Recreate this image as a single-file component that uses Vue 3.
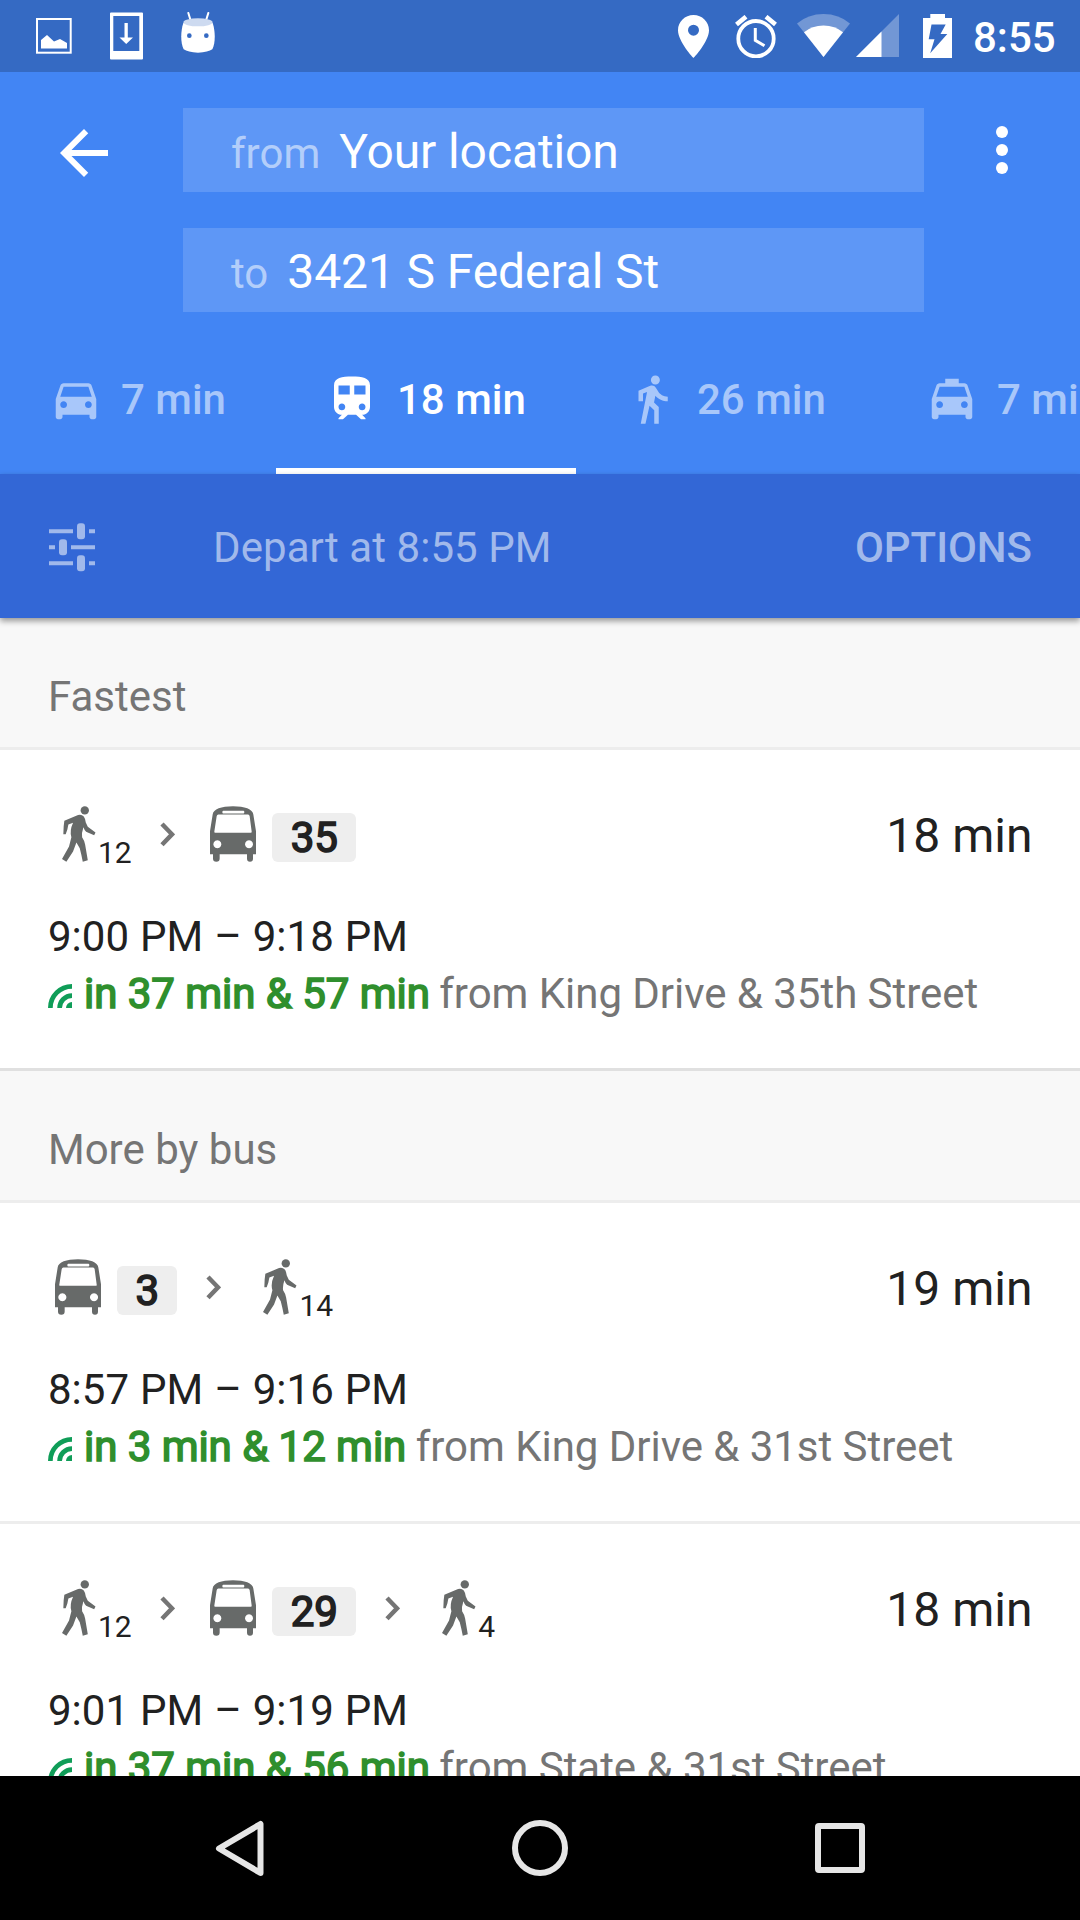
<script setup>
const tabs = [
  {
    label: '7 min',
    width: 276,
    icon: 'M18.92 6.01C18.72 5.42 18.16 5 17.5 5h-11c-.66 0-1.21.42-1.42 1.01L3 12v8c0 .55.45 1 1 1h1c.55 0 1-.45 1-1v-1h12v1c0 .55.45 1 1 1h1c.55 0 1-.45 1-1v-8l-2.08-5.99zM6.5 16c-.83 0-1.5-.67-1.5-1.5S5.67 13 6.5 13s1.5.67 1.5 1.5S7.33 16 6.5 16zm11 0c-.83 0-1.5-.67-1.5-1.5s.67-1.5 1.5-1.5 1.5.67 1.5 1.5-.67 1.5-1.5 1.5zM5 11l1.5-4.5h11L19 11H5z',
  },
  {
    label: '18 min',
    width: 300,
    active: true,
    icon: 'M12 2c-4.42 0-8 .5-8 4v9.5C4 17.43 5.57 19 7.5 19L6 20.5v.5h2l2.2-2h3.6l2.2 2h2v-.5L16.5 19c1.93 0 3.5-1.57 3.5-3.5V6c0-3.5-3.58-4-8-4zM7.5 17c-.83 0-1.5-.67-1.5-1.5S6.67 14 7.5 14s1.5.67 1.5 1.5S8.33 17 7.5 17zm3.5-7H6V6h5v4zm2 0V6h5v4h-5zm3.5 7c-.83 0-1.5-.67-1.5-1.5s.67-1.5 1.5-1.5 1.5.67 1.5 1.5-.67 1.5-1.5 1.5z',
  },
  {
    label: '26 min',
    width: 300,
    icon: 'M13.5 5.5c1.1 0 2-.9 2-2s-.9-2-2-2-2 .9-2 2 .9 2 2 2zM9.8 8.9L7 23h2.1l1.8-8 2.1 2v6h2v-7.5l-2.1-2 .6-3C14.8 12 16.8 13 19 13v-2c-1.9 0-3.5-1-4.3-2.4l-1-1.6c-.4-.6-1-1-1.7-1-.3 0-.5.1-.8.1L6 8.3V13h2V9.6l1.8-.7',
  },
  {
    label: '7 min',
    width: 276,
    icon: 'M18.92 6.01C18.72 5.42 18.16 5 17.5 5H15V3H9v2H6.5c-.66 0-1.21.42-1.42 1.01L3 12v8c0 .55.45 1 1 1h1c.55 0 1-.45 1-1v-1h12v1c0 .55.45 1 1 1h1c.55 0 1-.45 1-1v-8l-2.08-5.99zM6.5 16c-.83 0-1.5-.67-1.5-1.5S5.67 13 6.5 13s1.5.67 1.5 1.5S7.33 16 6.5 16zm11 0c-.83 0-1.5-.67-1.5-1.5s.67-1.5 1.5-1.5 1.5.67 1.5 1.5-.67 1.5-1.5 1.5zM5 11l1.5-4.5h11L19 11H5z',
  },
]

const sections = [
  {
    title: 'Fastest',
    routes: [
      {
        steps: [{ kind: 'walk', text: '12' }, { kind: 'next' }, { kind: 'bus', text: '35' }],
        duration: '18 min',
        times: '9:00 PM – 9:18 PM',
        live: 'in 37 min & 57 min',
        stop: 'from King Drive & 35th Street',
      },
    ],
  },
  {
    title: 'More by bus',
    routes: [
      {
        steps: [{ kind: 'bus', text: '3' }, { kind: 'next' }, { kind: 'walk', text: '14' }],
        duration: '19 min',
        times: '8:57 PM – 9:16 PM',
        live: 'in 3 min & 12 min',
        stop: 'from King Drive & 31st Street',
      },
      {
        steps: [
          { kind: 'walk', text: '12' },
          { kind: 'next' },
          { kind: 'bus', text: '29' },
          { kind: 'next' },
          { kind: 'walk', text: '4' },
        ],
        duration: '18 min',
        times: '9:01 PM – 9:19 PM',
        live: 'in 37 min & 56 min',
        stop: 'from State & 31st Street',
      },
    ],
  },
]
</script>

<template>
  <div class="screen">
    <div class="status">
      <svg class="s-image" width="36" height="36" viewBox="0 0 36 36">
        <rect x="1" y="1" width="33.7" height="33.7" fill="none" stroke="#fff" stroke-width="2" />
        <path d="M5 30.5V22l6-5 7 6.5 6-2.5 7 4v5.5z" fill="#fff" />
      </svg>
      <svg class="s-download" width="33" height="48" viewBox="0 0 33 48">
        <path fill="#fff" fill-rule="evenodd" d="M1 .5h31a1 1 0 0 1 1 1V46.500a1 1 0 0 1-1 1H1a1 1 0 0 1-1-1V1.500a1 1 0 0 1 1-1zM3.300 4v35h26V4z" />
        <path fill="#fff" d="M14.500 11h3.300v14.500H23L16.200 32 9.500 25.500h5z" />
      </svg>
      <svg class="s-droid" width="34" height="41" viewBox="0 0 102 123">
        <path d="M22 3l8 26M82 3l-8 26" stroke="#fff" stroke-width="6" stroke-linecap="round" />
        <path d="M7 33C-2 60-1 95 8 112Q20 121 51 122 82 121 94 112C103 95 104 60 95 33z" fill="#fff" />
        <ellipse cx="51" cy="31" rx="44" ry="12" fill="#cddaf0" />
        <circle cx="25" cy="71" r="7" fill="#356ac3" />
        <circle cx="76" cy="71" r="7" fill="#356ac3" />
      </svg>
      <span class="spacer"></span>
      <svg class="s-pin" width="31" height="43" viewBox="0 0 31 43">
        <path fill="#fff" fill-rule="evenodd" d="M15.500 0C6.900 0 0 6.700 0 15.200 0 26.500 15.500 43 15.500 43S31 26.500 31 15.200C31 6.700 24.100 0 15.500 0zm0 9.700a5.500 5.500 0 1 1 0 11 5.500 5.500 0 0 1 0-11z" />
      </svg>
      <svg class="s-alarm" width="42" height="43" viewBox="0 0 42 43" fill="none" stroke="#fff">
        <circle cx="21" cy="23.700" r="17.700" stroke-width="3.800" />
        <path d="M1.500 9.500L11 1.700M40.500 9.500L31 1.700" stroke-width="4.600" />
        <path d="M20.300 13v12.300l9.200 5.500" stroke-width="3" />
      </svg>
      <svg class="s-wifi" width="53" height="43" viewBox="0 0 53 43">
        <path d="M0 9.500Q11 0 26.500 0T53 9.500L26.500 43z" fill="#fff" fill-opacity=".3" />
        <path d="M7 18.300Q15 11.500 26.500 11.500T46 18.300L26.500 43z" fill="#fff" />
      </svg>
      <svg class="s-cell" width="43" height="43" viewBox="0 0 43 43">
        <path d="M0 43L43 0v43z" fill="#fff" fill-opacity=".3" />
        <path d="M0 43l25.500-25.500V43z" fill="#fff" />
      </svg>
      <svg class="s-battery" width="29" height="44" viewBox="0 0 29 44">
        <path fill="#fff" d="M7.300 0h14.700v4H29v40H0V4h7.300z" />
        <path fill="#356ac3" d="M8.500 10.500h14.200L17.500 20h6.800L7.200 39.300l4.300-14H5.700z" />
      </svg>
      <span class="clock">8:55</span>
    </div>

    <div class="header">
      <div class="search">
        <svg class="back" width="72" height="72" viewBox="0 0 24 24">
          <path fill="#fff" d="M20 11H7.830l5.590-5.590L12 4l-8 8 8 8 1.410-1.410L7.830 13H20v-2z" />
        </svg>
        <div class="fields">
          <div class="field"><span class="hint">from</span><span class="place">Your location</span></div>
          <div class="field"><span class="hint">to</span><span class="place">3421 S Federal St</span></div>
        </div>
        <svg class="more" width="72" height="72" viewBox="0 0 24 24" fill="#fff">
          <circle cx="12" cy="6" r="2" />
          <circle cx="12" cy="12" r="2" />
          <circle cx="12" cy="18" r="2" />
        </svg>
      </div>
      <div class="tabs">
        <div v-for="(tab, i) in tabs" :key="i" class="tab" :class="{ active: tab.active }" :style="{ width: tab.width + 'px' }">
          <svg width="54" height="54" viewBox="0 0 24 24"><path fill="currentColor" :d="tab.icon" /></svg>
          <span>{{ tab.label }}</span>
        </div>
      </div>
    </div>

    <div class="options">
      <svg width="46" height="49" viewBox="0 0 46 49" fill="#a1b9eb">
        <path d="M0 6.300h24v4H0zM40 6.300h6v4h-6zM0 22.300h6v4H0zM22 22.300h24v4H22zM0 38.300h24v4H0zM40 38.300h6v4h-6z" />
        <rect x="28" y=".3" width="8" height="16" rx="3" />
        <rect x="10" y="16.300" width="8" height="16" rx="3" />
        <rect x="28" y="32.300" width="8" height="16" rx="3" />
      </svg>
      <span class="depart">Depart at 8:55 PM</span>
      <span class="opt">OPTIONS</span>
    </div>

    <div class="list">
      <template v-for="section in sections" :key="section.title">
        <div class="section">{{ section.title }}</div>
        <div v-for="(route, r) in section.routes" :key="r" class="route">
          <div class="top">
            <div class="steps">
              <template v-for="(step, s) in route.steps" :key="s">
                <div v-if="step.kind === 'walk'" class="walk">
                  <svg width="33.500" height="56" viewBox="0 0 100 167" fill="#676a69">
                    <circle cx="68" cy="13" r="12.500" />
                    <path d="M7 44L48 27Q58 24 65 31 69 36 71 49L77 62 100 79 96 87 72 77Q67 72 64 63 58 80 60 93 67 103 69 115L77 162 62 166Q58 145 53 126L43 109 33 136 13 166 0 158 21 121 28 93Q22 74 33 50L19 55 16 70 11 84H4L5 60z" />
                  </svg>
                  <span>{{ step.text }}</span>
                </div>
                <svg v-else-if="step.kind === 'next'" class="next" width="15" height="25" viewBox="0 0 15 25">
                  <path d="M2 2l10 10.300L2 22.700" fill="none" stroke="#757575" stroke-width="4.500" />
                </svg>
                <div v-else class="bus">
                  <svg width="46" height="56" viewBox="0 0 138 167">
                    <path fill="#676a69" fill-rule="evenodd" d="M0 75L8 25C10 8 34 0 69 0s59 8 61 25l8 50v69h-9v13q0 10-9 10t-9-10v-13H29v13q0 10-10 10t-10-10v-13H0zM20 30l-7 46q-1 4 3 4h106q4 0 3-4l-6-46q-1-5-5-5H25q-4 0-5 5zM40 14q-3 0-3 4t3 4h60q3 0 3-4t-3-4zM22 102a12 12 0 1 0 .1 0zM117 102a12 12 0 1 0 .1 0z" />
                  </svg>
                  <span class="line">{{ step.text }}</span>
                </div>
              </template>
            </div>
            <span class="duration">{{ route.duration }}</span>
          </div>
          <div class="times">{{ route.times }}</div>
          <div class="live">
            <svg width="24" height="24" viewBox="0 0 24 24" fill="none" stroke="#0f9d58" stroke-width="4.700">
              <path d="M2.350 24A21.650 21.650 0 0 1 24 2.350M11.600 24A12.400 12.400 0 0 1 24 11.600" />
              <path d="M24 18v6h-6a6 6 0 0 1 6-6z" fill="#0f9d58" stroke="none" />
            </svg>
            <span class="soon">{{ route.live }}</span>
            <span class="stop">{{ route.stop }}</span>
          </div>
        </div>
      </template>
    </div>

    <div class="nav">
      <svg width="49" height="57" viewBox="0 0 49 57"><path d="M45.500 4v49L4 28.500z" fill="none" stroke="#e6e6e6" stroke-width="6" stroke-linejoin="round" /></svg>
      <svg width="56" height="56" viewBox="0 0 56 56"><circle cx="28" cy="28" r="25" fill="none" stroke="#e6e6e6" stroke-width="6" /></svg>
      <svg width="50" height="50" viewBox="0 0 50 50"><rect x="3" y="3" width="44" height="44" rx="1" fill="none" stroke="#e6e6e6" stroke-width="6" /></svg>
    </div>
  </div>
</template>

<style>
body {
  margin: 0;
}
</style>

<style scoped>
.screen {
  width: 1080px;
  height: 1920px;
  display: flex;
  flex-direction: column;
  overflow: hidden;
  background: #fff;
  font-family: Roboto, sans-serif;
  font-size: 42px;
  color: #212121;
}
svg {
  display: block;
  flex: none;
}
span {
  white-space: nowrap;
}
.status {
  flex: none;
  height: 72px;
  box-sizing: border-box;
  padding: 0 24px 0 36px;
  display: flex;
  align-items: flex-start;
  background: #356ac3;
}
.s-image { margin-top: 18px; }
.s-download { margin: 12px 0 0 38px; }
.s-droid { margin: 12px 0 0 38px; }
.spacer { flex: 1; }
.s-pin { margin-top: 15px; }
.s-alarm { margin: 15px 0 0 26px; }
.s-wifi { margin: 14px 0 0 20px; }
.s-cell { margin: 14px 0 0 6px; }
.s-battery { margin: 14px 0 0 24px; }
.clock {
  width: 83px;
  margin-left: 21px;
  line-height: 75px;
  font-weight: 500;
  color: #fff;
}
.header {
  flex: none;
  height: 402px;
  display: flex;
  flex-direction: column;
  background: #4285f4;
}
.search {
  display: flex;
  align-items: flex-start;
  padding: 36px 42px 0 48px;
}
.back {
  margin-top: 9px;
}
.fields {
  width: 741px;
  margin-left: 63px;
  display: flex;
  flex-direction: column;
  gap: 36px;
}
.field {
  height: 84px;
  box-sizing: border-box;
  padding-left: 48px;
  display: flex;
  align-items: baseline;
  line-height: 88px;
  background: #5e97f6;
}
.hint {
  margin-right: 19px;
  color: rgba(255, 255, 255, 0.54);
}
.place {
  font-size: 48px;
  letter-spacing: -0.1px;
  color: #fff;
}
.more {
  margin: 6px 0 0 42px;
}
.tabs {
  flex: 1;
  display: flex;
  overflow: hidden;
}
.tab {
  flex: none;
  box-sizing: border-box;
  padding: 18px 0 0 49px;
  display: flex;
  align-items: center;
  gap: 18px;
  font-weight: 500;
  color: #a8c7fa;
  border-bottom: 6px solid transparent;
}
.tab.active {
  color: #fff;
  border-bottom-color: #fff;
}
.options {
  flex: none;
  position: relative;
  z-index: 1;
  height: 144px;
  box-sizing: border-box;
  padding: 2px 48px 0 49px;
  display: flex;
  align-items: center;
  background: #3367d6;
  color: #a1b9eb;
  box-shadow: 0 3px 6px rgba(0, 0, 0, 0.4);
}
.depart {
  flex: 1;
  margin-left: 118px;
  letter-spacing: 0.08px;
}
.opt {
  font-weight: 500;
  letter-spacing: -0.05px;
}
.list {
  flex: 1;
  min-height: 0;
  overflow: hidden;
}
.section {
  height: 132px;
  box-sizing: border-box;
  padding: 54px 48px 0;
  line-height: 50px;
  background: #f8f8f8;
  color: #757575;
  border-bottom: 3px solid #ededed;
}
.route {
  height: 321px;
  box-sizing: border-box;
  padding: 54px 48px 0;
  border-bottom: 3px solid #ededed;
}
.route:has(+ .section) {
  border-bottom-color: #e0e0e0;
}
.top {
  height: 62px;
  margin-bottom: 42px;
  display: flex;
  justify-content: space-between;
}
.steps {
  display: flex;
  align-items: flex-start;
}
.walk {
  display: flex;
  padding: 2px 0 0 14px;
}
.walk span {
  margin: 29px -0.5px 0 2.5px;
  font-size: 30px;
  line-height: 35px;
}
.next {
  margin: 18px 28px 0 29px;
}
.bus {
  display: flex;
  padding: 2px 0 0 7px;
}
.line {
  margin: 7px 0 0 16px;
  padding: 0 18.400px;
  line-height: 49px;
  border-radius: 6px;
  background: #eee;
  -webkit-text-stroke: 1.6px currentColor;
}
.duration {
  margin-right: -0.5px;
  font-size: 48px;
  line-height: 64px;
}
.times {
  line-height: 57px;
  word-spacing: 0.6px;
}
.live {
  display: flex;
  align-items: baseline;
  line-height: 57px;
}
.soon {
  margin-left: 12px;
  color: #2f8f2d;
  letter-spacing: -0.04px;
  -webkit-text-stroke: 1.6px currentColor;
}
.stop {
  margin-left: 9.500px;
  color: #757575;
  letter-spacing: -0.04px;
}
.nav {
  flex: none;
  height: 144px;
  box-sizing: border-box;
  padding: 0 215px;
  display: flex;
  align-items: center;
  justify-content: space-between;
  background: #000;
}
</style>
